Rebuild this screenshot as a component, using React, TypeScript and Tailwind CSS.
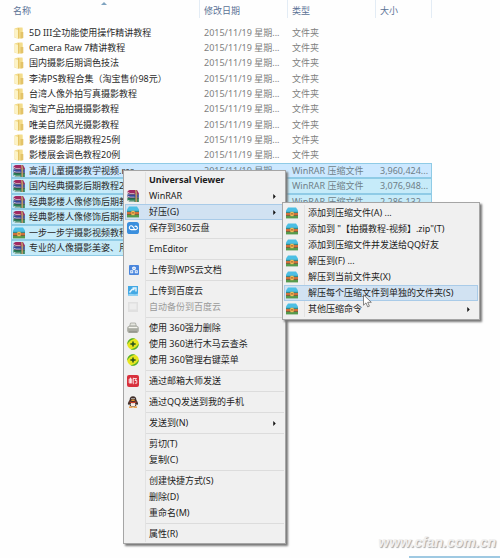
import { Fragment } from "react";
import type { ReactNode } from "react";
import clsx from "clsx";

function FolderIcon() {
  return (
    <svg viewBox="0 0 12 12" className="size-3 shrink-0">
      <path d="M1.500 1.500 5 .5h4.500v11H5l-3.500-.8z" fill="#f3dc8c" />
      <path d="M2 2l3 1v8.500l-3-.9z" fill="#fcf3c6" />
      <path d="M5 1h1.200v10.500H5z" fill="#e6c568" />
      <path d="M7.500 5h2.800v6l-2.800.5z" fill="#e3c368" />
      <path d="M9 1l1 .6V5H9z" fill="#f7e7a8" />
    </svg>
  );
}

function RarIcon() {
  return (
    <svg viewBox="0 0 12 12" className="size-3 shrink-0">
      <path d="M.6 1 2.600 0h7.400l1.800 3.200v1H3L.6 2.600z" fill="#a02a62" />
      <path d="M.4 4.200 3 4.400h8.800v3.400H3L.4 6.400z" fill="#35489c" />
      <path d="M.4 7.800 3 8h8.800v4H3L.4 10.600z" fill="#2b8058" />
      <path d="M1 2.400 3 3.600h4.500M1 6.200l2 1h4.500M1 10.200l2 1h4.500" stroke="#f1e6ee" strokeWidth=".8" fill="none" />
      <path d="M.6 3.200 3 4.300h8.800M.4 7 3 8h8.800" stroke="#3a1a30" strokeWidth=".6" fill="none" />
      <path d="M8 0h1.400l.8 3.500V12H8.400V3.500z" fill="#b99766" />
    </svg>
  );
}

function HaoZipIcon() {
  return (
    <svg viewBox="0 0 12 12" className="size-3 shrink-0">
      <path d="M2 .6h8L12 3.600V5H0V3.600z" fill="#4cbfe4" />
      <path d="M0 4.800h12v1.400H0z" fill="#3a8a86" />
      <path d="M0 6h12v2.400H0z" fill="#d0713a" />
      <path d="M0 8.300h12v3.100H0z" fill="#559a4c" />
      <path d="M0 8.200h12v.7H0z" fill="#7b4a2c" />
      <path d="M4.400 4.800h3.200v4.400H4.400z" fill="#f2bd58" />
      <path d="M5.300 6.200h1.400v1.400H5.300z" fill="#8a4a22" />
    </svg>
  );
}

function CloudDiskIcon() {
  return (
    <svg viewBox="0 0 12 12" className="size-3 shrink-0">
      <rect width="12" height="12" rx="2.600" fill="#3b8fdd" />
      <path
        d="M8.800 7.600H4.200a1.900 1.900 0 1 1 1.400-3.200L7.400 7A1.700 1.700 0 1 0 7.600 4.600"
        fill="none"
        stroke="#fff"
        strokeWidth="1.100"
      />
    </svg>
  );
}

function WpsIcon() {
  return (
    <svg viewBox="0 0 12 12" className="size-3 shrink-0">
      <rect x="2" y="1" width="10" height="10" rx="1" fill="#4a86dc" />
      <path d="M7 2.400 8.800 3.300v2L7 6.200l-1.800-.9v-2z" fill="#fff" />
      <path d="M3.200 6.200h3v3h-3zM7.800 6.200h3v3h-3z" fill="#e7f0fc" />
      <path d="M4.200 7.200h1v1h-1zM8.800 7.200h1v1h-1zM6.500 3.800h1v1h-1z" fill="#4a86dc" />
    </svg>
  );
}

function BaiduIcon() {
  return (
    <svg viewBox="0 0 12 12" className="size-3 shrink-0">
      <path d="M1 1h10v10H1z" fill="#43a8e4" />
      <path d="M2.500 7.500 5 4.500h2.500M5.500 3H9v3.500" fill="none" stroke="#e6f5fd" strokeWidth="1.400" />
      <path d="M1 9.500c3-2 6 1 10-1V11H1z" fill="#8fd0f2" />
    </svg>
  );
}

function BackupIcon() {
  return (
    <svg viewBox="0 0 12 12" className="size-3 shrink-0">
      <path d="M1 1h10v10H1z" fill="#e0e0e0" />
      <path d="M2.500 2.500h7v6h-7z" fill="#ededed" />
    </svg>
  );
}

function ShredIcon() {
  return (
    <svg viewBox="0 0 12 12" className="size-3 shrink-0">
      <path d="M3.500 1h5l.8 3H2.700z" fill="#e4e5de" stroke="#8d8f86" strokeWidth=".6" />
      <rect x=".2" y="3.800" width="11.600" height="7.200" rx="2.800" fill="#a9aba2" />
      <path d="M1.600 5.500h8.800" stroke="#f4f4ee" strokeWidth="1.400" />
      <path d="M2 9.800h8" stroke="#85877e" strokeWidth=".8" />
    </svg>
  );
}

function SafeIcon() {
  return (
    <svg viewBox="0 0 12 12" className="size-3 shrink-0">
      <circle cx="6" cy="6" r="5.800" fill="#e6e61e" />
      <path
        d="M.3 6.500A5.800 5.800 0 0 1 8.500.8C5.500 1 2 2.800.3 6.500zM11.700 5.500A5.800 5.800 0 0 1 3.500 11.200C6.500 11 10 9.200 11.700 5.500z"
        fill="#4fae35"
      />
      <path d="M6 3.400v5.200M3.400 6h5.200" stroke="#24501c" strokeWidth="1.500" />
    </svg>
  );
}

function MailIcon() {
  return (
    <svg viewBox="0 0 12 12" className="size-3 shrink-0">
      <rect width="12" height="12" rx="2" fill="#d8303c" />
      <path
        d="M2.200 4h2.600v4H2.200zM2.200 6h2.600M3.500 2.600V8M6.300 2.800v6.400M6.300 3.500h3.200L8 5.500h1.800v2.700H7.800"
        fill="none"
        stroke="#fff"
        strokeWidth=".8"
      />
    </svg>
  );
}

function QqIcon() {
  return (
    <svg viewBox="0 0 12 12" className="size-3 shrink-0">
      <path
        d="M6 .2c2.200 0 3.400 1.500 3.400 3.800 1.200 1.600 2 3.200 1.600 4.800-.5.300-.9-.4-1.200-.8C9.500 10 8 11 6 11S2.500 10 2.200 8c-.3.400-.7 1.100-1.200.8C.6 7.200 1.400 5.600 2.600 4 2.600 1.700 3.800.2 6 .2z"
        fill="#40302c"
      />
      <ellipse cx="6" cy="8.400" rx="2.400" ry="2.200" fill="#f5efe8" />
      <path d="M2.600 5.300c2 1 4.800 1 6.800 0v1.200c-2 1-4.800 1-6.800 0z" fill="#c8402c" />
      <ellipse cx="6" cy="4.300" rx="2" ry=".8" fill="#f0a028" />
      <circle cx="5" cy="2.600" r=".7" fill="#fff" />
      <circle cx="7" cy="2.600" r=".7" fill="#fff" />
      <path d="M2 10.400h3.600v1.400H2zM6.400 10.400H10v1.400H6.400z" fill="#eb8f24" />
    </svg>
  );
}

const folders = [
  "5D III全功能使用操作精讲教程",
  "Camera Raw 7精讲教程",
  "国内摄影后期调色技法",
  "李涛PS教程合集（淘宝售价98元）",
  "台湾人像外拍写真摄影教程",
  "淘宝产品拍摄摄影教程",
  "唯美自然风光摄影教程",
  "影楼摄影后期教程25例",
  "影楼展会调色教程20例",
];

type Archive = { name: string; date?: string; type?: string; size?: string; zip?: boolean };

const archives: Archive[] = [
  {
    name: "高清儿童摄影教学视频.rar",
    date: "2015/11/19 星期...",
    type: "WinRAR 压缩文件",
    size: "3,960,424...",
  },
  { name: "国内经典摄影后期教程2", type: "WinRAR 压缩文件", size: "3,076,948..." },
  { name: "经典影楼人像修饰后期教", type: "WinRAR 压缩文件", size: "2,286,132..." },
  { name: "经典影楼人像修饰后期教" },
  { name: "一步一步学摄影视频教程", zip: true },
  { name: "专业的人像摄影美姿、用" },
];

type Item = {
  label: string;
  icon?: ReactNode;
  bold?: boolean;
  arrow?: boolean;
  active?: boolean;
  disabled?: boolean;
};

const menuGroups: Item[][] = [
  [
    { label: "Universal Viewer", bold: true },
    { label: "WinRAR", icon: <RarIcon />, arrow: true },
    { label: "好压(G)", icon: <HaoZipIcon />, arrow: true, active: true },
    { label: "保存到360云盘", icon: <CloudDiskIcon /> },
  ],
  [{ label: "EmEditor" }],
  [{ label: "上传到WPS云文档", icon: <WpsIcon /> }],
  [
    { label: "上传到百度云", icon: <BaiduIcon /> },
    { label: "自动备份到百度云", icon: <BackupIcon />, disabled: true },
  ],
  [
    { label: "使用 360强力删除", icon: <ShredIcon /> },
    { label: "使用 360进行木马云查杀", icon: <SafeIcon /> },
    { label: "使用 360管理右键菜单", icon: <SafeIcon /> },
  ],
  [{ label: "通过邮箱大师发送", icon: <MailIcon /> }],
  [{ label: "通过QQ发送到我的手机", icon: <QqIcon /> }],
  [{ label: "发送到(N)", arrow: true }],
  [{ label: "剪切(T)" }, { label: "复制(C)" }],
  [{ label: "创建快捷方式(S)" }, { label: "删除(D)" }, { label: "重命名(M)" }],
  [{ label: "属性(R)" }],
];

const subGroups: Item[][] = [
  [
    { label: "添加到压缩文件(A) ...", icon: <HaoZipIcon /> },
    { label: '添加到 "【拍摄教程-视频】.zip"(T)', icon: <HaoZipIcon /> },
    { label: "添加到压缩文件并发送给QQ好友", icon: <HaoZipIcon /> },
    { label: "解压到(F) ...", icon: <HaoZipIcon /> },
    { label: "解压到当前文件夹(X)", icon: <HaoZipIcon /> },
    { label: "解压每个压缩文件到单独的文件夹(S)", icon: <HaoZipIcon />, active: true },
    { label: "其他压缩命令", icon: <HaoZipIcon />, arrow: true },
  ],
];

function Menu({ groups, className }: { groups: Item[][]; className: string }) {
  return (
    <div
      role="menu"
      className={clsx(
        "absolute border border-[#a5a5a5] bg-[#f0f0f0] px-px shadow-[2px_2px_2px_#777]",
        className
      )}
    >
      {groups.map((group, i) => (
        <Fragment key={i}>
          {i > 0 && (
            <div role="separator" className="flex h-[5px] items-center">
              <span className="h-full w-[21px] border-r border-[#e2e2e2]" />
              <span className="h-px flex-1 bg-[#dcdcdc]" />
            </div>
          )}
          {group.map((item) => (
            <button
              key={item.label}
              role="menuitem"
              disabled={item.disabled}
              className={clsx(
                "flex h-4 w-full items-center text-left whitespace-nowrap",
                item.bold && "font-bold",
                item.disabled ? "text-[#9a9a9a]" : "text-[#1c1c1c]",
                item.active && "bg-[#d1e2f2] outline -outline-offset-1 outline-[#a9cbe8]"
              )}
            >
              <span
                className={clsx(
                  "flex h-full w-[21px] items-center border-r pl-[2px]",
                  item.active ? "border-transparent" : "border-[#e2e2e2]"
                )}
              >
                {item.icon}
              </span>
              <span className="flex-1 pl-[3px]">{item.label}</span>
              {item.arrow && (
                <svg viewBox="0 0 3 6" className="mr-2 h-[5px] w-[3px]">
                  <path d="M0 0l3 3-3 3z" fill="#111" />
                </svg>
              )}
            </button>
          ))}
        </Fragment>
      ))}
    </div>
  );
}

export default function App() {
  return (
    <main className="relative flex min-h-screen flex-col overflow-hidden bg-[#fefefe] pl-[11px] font-['Noto_Sans','Noto_Sans_CJK_SC',sans-serif] text-[9px] leading-[14px] text-[#2a2a2a]">
      <table className="w-[421px] table-fixed border-collapse text-left whitespace-nowrap">
        <colgroup>
          <col className="w-[188px]" />
          <col className="w-[88px]" />
          <col className="w-[88px]" />
          <col className="w-[57px]" />
        </colgroup>
        <thead className="text-[#5b7296]">
          <tr className="h-[25px] align-top">
            <th className="p-0 font-normal">
              <span className="flex pt-1 pl-[2px]">
                名称
                <svg viewBox="0 0 6 3" className="-mt-[2px] ml-[70px] h-[3px] w-[6px]">
                  <path d="M0 3l3-3 3 3z" fill="#7fa3c0" />
                </svg>
              </span>
            </th>
            <th className="p-0 font-normal">
              <span className="block border-l border-[#e3ecf5] pt-1 pl-1">修改日期</span>
            </th>
            <th className="p-0 font-normal">
              <span className="block border-l border-[#e3ecf5] pt-1 pl-1">类型</span>
            </th>
            <th className="p-0 font-normal">
              <span className="block border-x border-[#e3ecf5] pt-1 pl-1">大小</span>
            </th>
          </tr>
        </thead>
        <tbody>
          {folders.map((name) => (
            <tr key={name} className="h-[15px] nth-[3n]:h-4">
              <td className="p-0">
                <span className="flex items-center gap-1 pl-[2px]">
                  <FolderIcon />
                  {name}
                </span>
              </td>
              <td className="p-0 pl-[5px] text-[#808080]">2015/11/19 星期...</td>
              <td className="p-0 pl-[5px] text-[#808080]">文件夹</td>
              <td className="p-0" />
            </tr>
          ))}
        </tbody>
        <tbody>
          {archives.map((file, i) => (
            <tr
              key={i}
              className="h-[15px] bg-[#c6ebf9] outline -outline-offset-1 outline-[#8fcbe6] first:bg-[#cce8ff] even:h-4"
            >
              <td className="p-0">
                <span className="flex items-center gap-1 pl-[2px]">
                  {file.zip ? <HaoZipIcon /> : <RarIcon />}
                  {file.name}
                </span>
              </td>
              <td className="p-0 pl-[5px] text-[#6f7f88]">{file.date}</td>
              <td className="p-0 pl-[5px] text-[#6f7f88]">{file.type}</td>
              <td className="p-0 pl-[5px] text-[#6f7f88]">{file.size}</td>
            </tr>
          ))}
        </tbody>
      </table>

      <Menu groups={menuGroups} className="top-[170px] left-[123px] w-[163px] py-px" />
      <Menu groups={subGroups} className="top-[202px] left-[282px] w-[198px] py-[2px]" />

      {/* mouse pointer */}
      <svg viewBox="0 0 9 14" className="absolute top-[294px] left-[363px] h-[14px] w-[9px]">
        <path
          d="M.5.8v10.400l2.500-2.300 1.700 4 1.700-.7-1.700-3.900h3.600z"
          fill="#fff"
          stroke="#555"
          strokeWidth=".7"
        />
      </svg>

      <footer className="mt-auto flex flex-col items-end">
        <p className="pr-1 pb-1 font-['Liberation_Sans',sans-serif] text-[14px] leading-5 font-bold text-[#f0f0f0] italic [text-shadow:1px_1px_1px_#a8a8a8]">
          www.cfan.com.cn
        </p>
        <div className="h-[2px] w-[91px] bg-[#9fc9e2]" />
      </footer>
    </main>
  );
}
